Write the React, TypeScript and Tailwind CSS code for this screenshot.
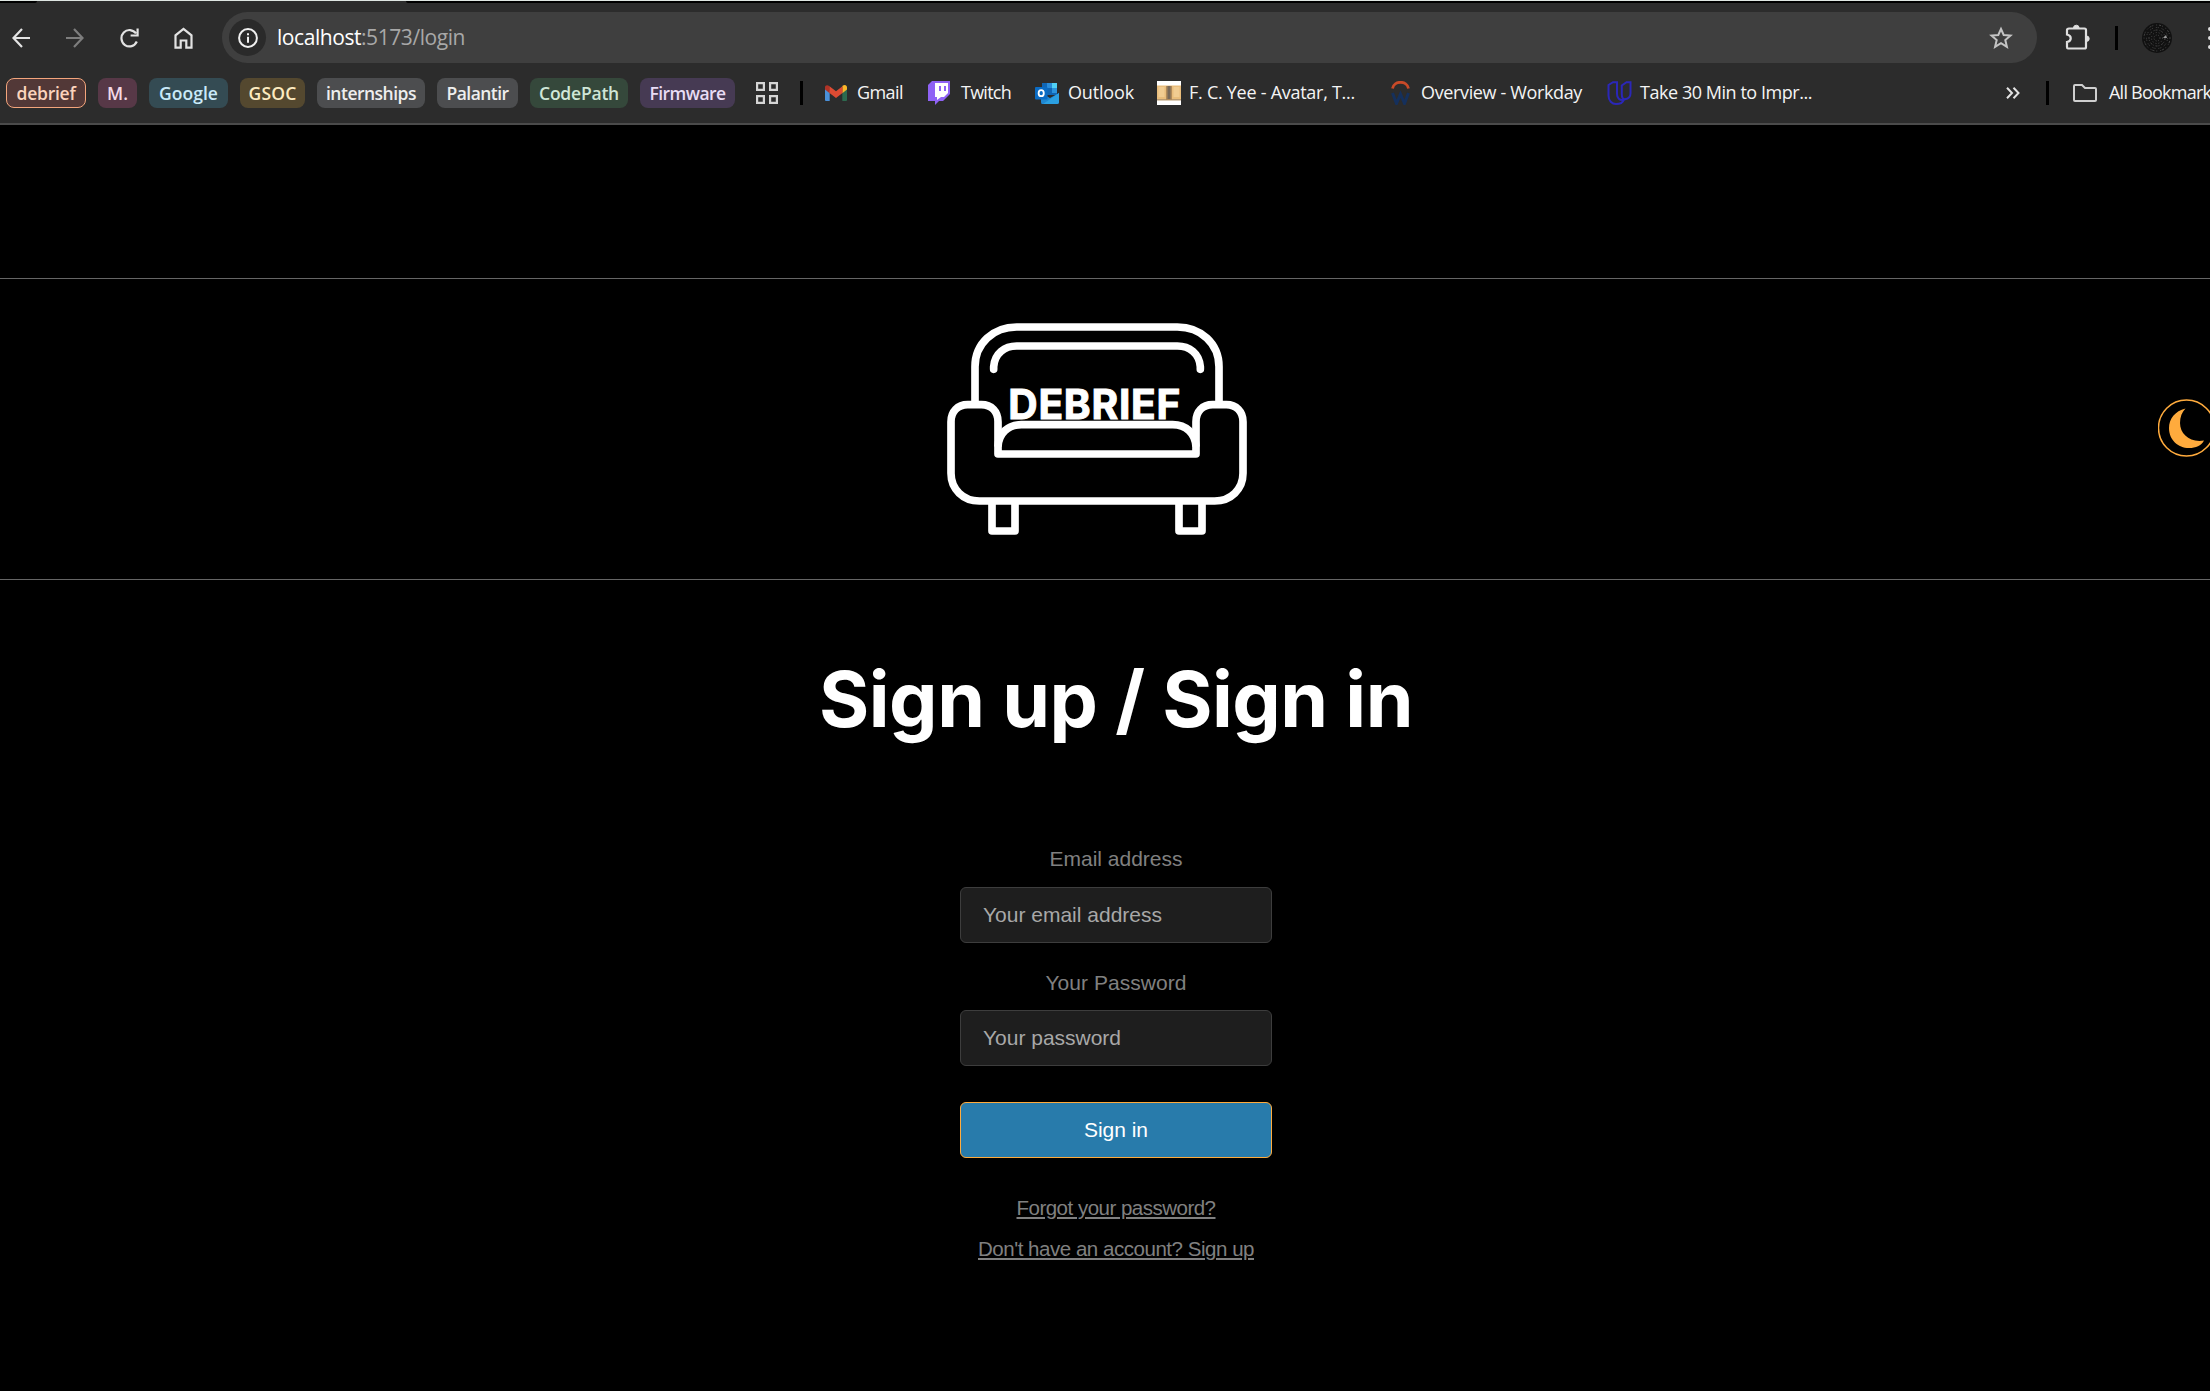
import React from "react";

const seg = "font-['Open_Sans','Noto_Sans',sans-serif]";

type Chip = { label: string; box: string; w: number };
const chips: Chip[] = [
  { label: "debrief", box: "w-20 bg-[#523837] text-[#fbd3bd] border-[#f3a57c]", w: 59 },
  { label: "M.", box: "w-[39px] bg-[#573847] text-[#f3d9e6] border-transparent", w: 21 },
  { label: "Google", box: "w-[79px] bg-[#344b53] text-[#c9e9f8] border-transparent", w: 59 },
  { label: "GSOC", box: "w-[65px] bg-[#54482f] text-[#fdebc0] border-transparent", w: 48 },
  { label: "internships", box: "w-[108px] bg-[#4c4d4f] text-[#eeeeee] border-transparent", w: 90 },
  { label: "Palantir", box: "w-[81px] bg-[#4c4d4f] text-[#eeeeee] border-transparent", w: 62 },
  { label: "CodePath", box: "w-[98px] bg-[#35483b] text-[#cfe6d7] border-transparent", w: 80 },
  { label: "Firmware", box: "w-[95px] bg-[#463a53] text-[#e8dcf5] border-transparent", w: 76 },
];

/* Single line of text fitted to a fixed advance width. */
function Fit({ text, w, className = "" }: { text: string; w: number; className?: string }) {
  const ref = React.useRef<HTMLSpanElement>(null);
  const [s, setS] = React.useState(0);
  React.useLayoutEffect(() => {
    const el = ref.current;
    if (el) setS((w - el.getBoundingClientRect().width) / text.length);
  }, []);
  return (
    <span ref={ref} className={`inline-block whitespace-pre ${className}`} style={{ letterSpacing: s }}>
      {text}
    </span>
  );
}

function Bookmark({ icon, text, w, box }: { icon: React.ReactNode; text: string; w: number; box: string }) {
  return (
    <div className={`flex h-[30px] shrink-0 items-center ${box}`}>
      {icon}
      <Fit text={text} w={w} className="text-[18px] leading-[28px] pb-[2px] text-[#f4f4f4]" />
    </div>
  );
}

const Gmail = () => (
  <svg className="mr-[9px] h-6 w-6 shrink-0" viewBox="0 0 24 24">
    <path d="M1 6v13q0 1 1 1h3.700V10z" fill="#4a90d9" />
    <path d="M23 6v13q0 1-1 1h-3.700V10z" fill="#2d6a4f" />
    <path d="M18.300 6v6.200L23 8.600V6.500c0-3-2.800-3.300-4.700-1.500z" fill="#fbb829" />
    <path d="M1 6.500v2.100l4.700 3.600V5.500C3.500 3.500 1 4 1 6.500z" fill="#b03326" />
    <path d="M5.500 5.200L12 10.200l6.500-5v6.900L12 17l-6.500-4.900z" fill="#dd4b33" />
  </svg>
);
const Twitch = () => (
  <svg className="mr-[11px] h-6 w-[22px] shrink-0" viewBox="0 0 22 24">
    <path d="M4 0h18v13l-7 7h-4l-4 4v-4H0V4z" fill="#8f62f5" />
    <path d="M7 2h13v10l-4 4h-3l-4 3v-3H7z" fill="#fff" />
    <path d="M11 5h2v5h-2zM16 5h2v5h-2z" fill="#8f62f5" />
  </svg>
);
const Outlook = () => (
  <svg className="mr-[9px] h-6 w-6 shrink-0" viewBox="0 0 24 24">
    <path d="M7 2h15v12H7z" fill="#1066b5" />
    <path d="M12 2h5v5h-5z" fill="#2a8bd8" />
    <path d="M17 2h5v5h-5z" fill="#50d0f5" />
    <path d="M17 7h5v5h-5z" fill="#2b93dd" />
    <path d="M6 12l9 5 9-5v9q0 2-2 2H7q-1 0-1-2z" fill="#1f88d3" />
    <path d="M24 12L8 23h14q2 0 2-2z" fill="#2ba0e2" />
    <rect y="6" width="12.500" height="12.500" rx="1" fill="#0b6cc4" />
    <ellipse cx="6.200" cy="12.200" rx="2.600" ry="3" fill="none" stroke="#fff" strokeWidth="1.800" />
  </svg>
);
const Book = () => (
  <svg className="mr-2 h-6 w-6 shrink-0" viewBox="0 0 24 24">
    <path d="M0 0h24v24H0z" fill="#fff" />
    <path d="M0 4.500h24v14H0z" fill="#e9bd7b" />
    <path d="M1.500 6h6v10h-6zM16.500 6h6v10h-6z" fill="#f1cc91" />
    <path d="M0 18h24v1.500H0z" fill="#b99a70" />
    <path d="M9 5h6v14H9z" fill="#b08a5a" />
    <path d="M10.500 5h3v13h-3z" fill="#776859" />
  </svg>
);
const Workday = () => (
  <svg className="mr-[11px] h-6 w-[19px] shrink-0" viewBox="0 0 19 24">
    <path d="M1.500 7.500C3 -0.800 16 -0.800 17.500 7.500" fill="none" stroke="#c94a28" strokeWidth="2.800" />
    <path d="M1.500 12l4 10.500L9.500 13l4 9.500L17.500 12" fill="none" stroke="#15305c" strokeWidth="3" />
  </svg>
);
const Udacity = () => (
  <svg className="mr-2 h-6 w-[25px] shrink-0" viewBox="0 0 25 24" fill="none" stroke="#2b27b8" strokeWidth="2">
    <path d="M10 1.200H6L1.500 4v10.500C1.500 20 5 23 9 23s7-2 7.800-4.200C12.500 19.500 10 17 10 13z" />
    <path d="M14.800 4.500V13c0 3.500 1 5.500 3.200 5.200 3.500-.500 5.500-2.500 5.500-6V1.200h-4z" />
  </svg>
);

function Toolbar() {
  return (
    <div className="flex h-[69px] items-center pl-3">
      <svg className="h-[22px] w-[18px] shrink-0" viewBox="0 0 18 22" fill="none" stroke="#e3e3e3" strokeWidth="2.200">
        <path d="M18 11H1.800M10 2L1.500 11l8.500 9" />
      </svg>
      <svg className="ml-9 h-[22px] w-[18px] shrink-0" viewBox="0 0 18 22" fill="none" stroke="#7d7d7d" strokeWidth="2.200">
        <path d="M0 11h16.200M8 2l8.500 9L8 20" />
      </svg>
      <svg className="ml-9 h-[22px] w-[19px] shrink-0" viewBox="0 0 19 22" fill="none" stroke="#e3e3e3" strokeWidth="2.200">
        <path d="M16.800 14.500A8 8.200 0 1 1 16 6.500M17.600 1.500v7h-7" />
      </svg>
      <svg className="ml-[35px] h-[22px] w-[19px] shrink-0" viewBox="0 0 19 22" fill="none" stroke="#e3e3e3" strokeWidth="2.200">
        <path d="M1.500 20.700V8.300l8-6.500 8 6.500v12.400h-5.200v-7.200H6.700v7.200z" />
      </svg>
      <div className="ml-[29px] flex h-[51px] w-[1815px] shrink-0 items-center rounded-full bg-[#3f3f3f] pl-[7px]">
        <div className="flex h-[37px] w-[37px] items-center justify-center rounded-full bg-[#2a2a2a]">
          <svg className="h-5 w-5" viewBox="0 0 20 20" fill="none" stroke="#f0f0f0" strokeWidth="2">
            <circle cx="10" cy="10" r="8.900" />
            <path d="M10 8.800v6M10 5.200v2" />
          </svg>
        </div>
        <div className="ml-[11px] pb-px text-[21px] leading-[50px] text-white">
          <Fit text="localhost" w={84} />
          <Fit text=":5173/login" w={104} className="text-[#a8a8a8]" />
        </div>
        <svg className="ml-auto mr-[24px] h-6 w-6" viewBox="0 0 24 24" fill="none" stroke="#c4c4c4" strokeWidth="2">
          <path d="M12 3l2.700 6 6.800.600-5.200 4.500 1.600 6.700L12 17.200l-5.900 3.600 1.600-6.700L2.500 9.600 9.300 9z" />
        </svg>
      </div>
      <svg className="mb-[2px] ml-[28px] h-[26px] w-[26px] shrink-0" viewBox="0 0 26 26">
        <path d="M4 4.500h15.500q1.500 0 1.500 1.500v17q0 1.500-1.500 1.500H3q-1 0-1-1.500v-5c5-1 5-6.500 0-7.500V6q0-1.500 2-1.500z" fill="none" stroke="#dfdfdf" strokeWidth="2.200" />
        <path d="M8.500 4a2.800 2.800 0 0 1 5.600 0zM21.500 12a2.700 2.700 0 0 1 0 5.400z" fill="#dfdfdf" stroke="#dfdfdf" />
      </svg>
      <div className="ml-6 h-6 w-[3px] shrink-0 bg-black" />
      <svg className="ml-6 h-[30px] w-[30px] shrink-0" viewBox="0 0 30 30">
        <circle cx="15" cy="15" r="15" fill="#111" />
        <g fill="none" stroke="#4a4a4a" strokeWidth="1">
          <circle cx="15" cy="15" r="13" strokeDasharray="1 2 2 1 1 3" />
          <circle cx="15" cy="15" r="10.500" strokeDasharray="1 1 1 3" />
          <circle cx="15" cy="15" r="8" strokeDasharray="2 2 1 1" />
          <circle cx="15" cy="15" r="5.500" strokeDasharray="1 2" />
          <circle cx="15" cy="15" r="3" strokeDasharray="1 1.500" />
        </g>
        <path d="M21 15l3-3 1 3z" fill="#999" />
      </svg>
      <div className="ml-[36px] flex w-1 shrink-0 flex-col gap-[5px]">
        <i className="h-1 w-1 rounded-full bg-[#dfdfdf]" />
        <i className="h-1 w-1 rounded-full bg-[#dfdfdf]" />
        <i className="h-1 w-1 rounded-full bg-[#dfdfdf]" />
      </div>
    </div>
  );
}

function Bookmarks() {
  return (
    <div className="flex h-[42px] items-center pl-[6px]">
      <div className="flex gap-3">
        {chips.map((c) => (
          <div key={c.label} className={`flex h-[30px] shrink-0 items-center justify-center rounded-lg border-[1.500px] ${c.box}`}>
            <Fit text={c.label} w={c.w} className="pb-px text-[17.500px] font-semibold leading-[26px]" />
          </div>
        ))}
      </div>
      <svg className="ml-[21px] h-[22px] w-[22px] shrink-0" viewBox="0 0 22 22" fill="none" stroke="#d5d5d5" strokeWidth="2.200">
        <path d="M1.100 1.100h6.800v6.800H1.100zM14.100 1.100h6.800v6.800h-6.800zM1.100 14.100h6.800v6.800H1.100zM14.100 14.100h6.800v6.800h-6.800z" />
      </svg>
      <div className="ml-[22px] h-6 w-[3px] shrink-0 bg-black" />
      <Bookmark icon={<Gmail />} text="Gmail" w={46} box="ml-[21px] w-[104px]" />
      <Bookmark icon={<Twitch />} text="Twitch" w={50} box="w-[107px]" />
      <Bookmark icon={<Outlook />} text="Outlook" w={66} box="w-[122px]" />
      <Bookmark icon={<Book />} text="F. C. Yee - Avatar, T..." w={166} box="w-[234px]" />
      <Bookmark icon={<Workday />} text="Overview - Workday" w={161} box="w-[216px]" />
      <Bookmark icon={<Udacity />} text="Take 30 Min to Impr..." w={172} box="w-[399px]" />
      <svg className="h-3 w-[14px] shrink-0" viewBox="0 0 14 12" fill="none" stroke="#e3e3e3" strokeWidth="2">
        <path d="M1 .800L6 6l-5 5.200M7.500.800L12.500 6l-5 5.200" />
      </svg>
      <div className="ml-[26px] h-6 w-[3px] shrink-0 bg-black" />
      <svg className="ml-6 h-[18px] w-6 shrink-0" viewBox="0 0 24 18" fill="none" stroke="#cfcfcf" strokeWidth="2">
        <path d="M1 2q0-1 1-1h7l3 3h10q1 0 1 1v11q0 1-1 1H2q-1 0-1-1z" />
      </svg>
      <div className="ml-3 flex shrink-0">
        <Fit text="All Bookmarks" w={110} className="pb-[2px] text-[18px] leading-[28px] text-[#f4f4f4]" />
      </div>
    </div>
  );
}

const Sofa = () => (
  <svg className="h-[260px] w-[350px]" viewBox="0 0 1050 780" fill="none" stroke="#fff" strokeWidth="23">
    <path d="M165 315V200C165 130 220 81 290 81H772C842 81 897 130 897 200V315" />
    <path d="M221 208V200C224 160 254 138 290 138H772C808 138 838 160 841 200V208" strokeLinecap="round" />
    <path d="M234 462V365C234 335 215 314 184 314H143C113 314 93 335 93 365V520C93 568 130 603 178 603H884C932 603 969 568 969 520V365C969 335 949 314 919 314H878C847 314 828 335 828 365V462Z" strokeLinejoin="round" />
    <path d="M234 440C236 400 264 374 304 374H758C798 374 826 400 828 440" />
    <path d="M216 603V693H285V603M777 603V693H846V603" strokeLinejoin="round" />
    <text x="265" y="357" fill="#fff" stroke="#fff" strokeWidth="3" fontFamily="Inter, sans-serif" fontWeight="700" fontSize="122" textLength="516" lengthAdjust="spacing">DEBRIEF</text>
  </svg>
);

export default function App() {
  return (
    <div className="h-[1391px] w-[2210px] overflow-hidden bg-black">
      <header className={`${seg} h-[125px] border-b-2 border-[#4b4b4b] bg-[#2c2c2c]`}>
        <div className="h-px bg-[#dfe6e2]" />
        <div className="flex h-[2px] justify-between">
          <div className="w-[37px] rounded-br bg-black" />
          <div className="w-[1804px] rounded-bl bg-black" />
        </div>
        <Toolbar />
        <Bookmarks />
      </header>

      <section className="mt-[153px] flex h-[302px] border-y border-[#666]">
        <div className="ml-[920px] mt-[21px]">
          <Sofa />
        </div>
        <div className="ml-[888px] mt-[120px] shrink-0">
          <svg className="h-[58px] w-[58px]" viewBox="0 0 58 58">
            <circle cx="28.500" cy="29" r="28" fill="none" stroke="#ffab3d" strokeWidth="1.500" />
            <path d="M27.500 9.500C17 12 11 20 11 29C11 41 20 49 31 49C38 49 43 47 46 41.500C32 44 22 35 22 24C22 18 24 13 27.500 9.500Z" fill="#ffab3d" />
          </svg>
        </div>
      </section>

      <main className="flex w-[2232px] flex-col items-center font-['Liberation_Sans',Arial,sans-serif] text-[21px] text-[#808080]">
        <h1 className="mt-[78px] font-['Inter',sans-serif] text-[76.800px] font-bold leading-[84px] text-white">
          <Fit text="Sign up / Sign in" w={594} />
        </h1>
        <div className="mt-[105px] leading-6">
          <Fit text="Email address" w={133} />
        </div>
        <div className="mt-[16px] flex h-14 w-[312px] items-center rounded-md border border-[#3d3d3d] bg-[#1e1e1e] pl-[22px] text-[#a8a8a8]">
          <Fit text="Your email address" w={179} />
        </div>
        <div className="mt-[28px] leading-6">
          <Fit text="Your Password" w={141} />
        </div>
        <div className="mt-[15px] flex h-14 w-[312px] items-center rounded-md border border-[#3d3d3d] bg-[#1e1e1e] pl-[22px] text-[#a8a8a8]">
          <Fit text="Your password" w={138} />
        </div>
        <button className="mt-9 h-14 w-[312px] rounded-md border border-[#ffab3d] bg-[#287bab] text-white">
          <Fit text="Sign in" w={64} />
        </button>
        <a className="mt-[38px] text-[20.500px] leading-6">
          <Fit text="Forgot your password?" w={199} className="underline" />
        </a>
        <a className="mt-[17px] text-[20.500px] leading-6">
          <Fit text="Don't have an account? Sign up" w={276} className="underline" />
        </a>
      </main>
    </div>
  );
}
